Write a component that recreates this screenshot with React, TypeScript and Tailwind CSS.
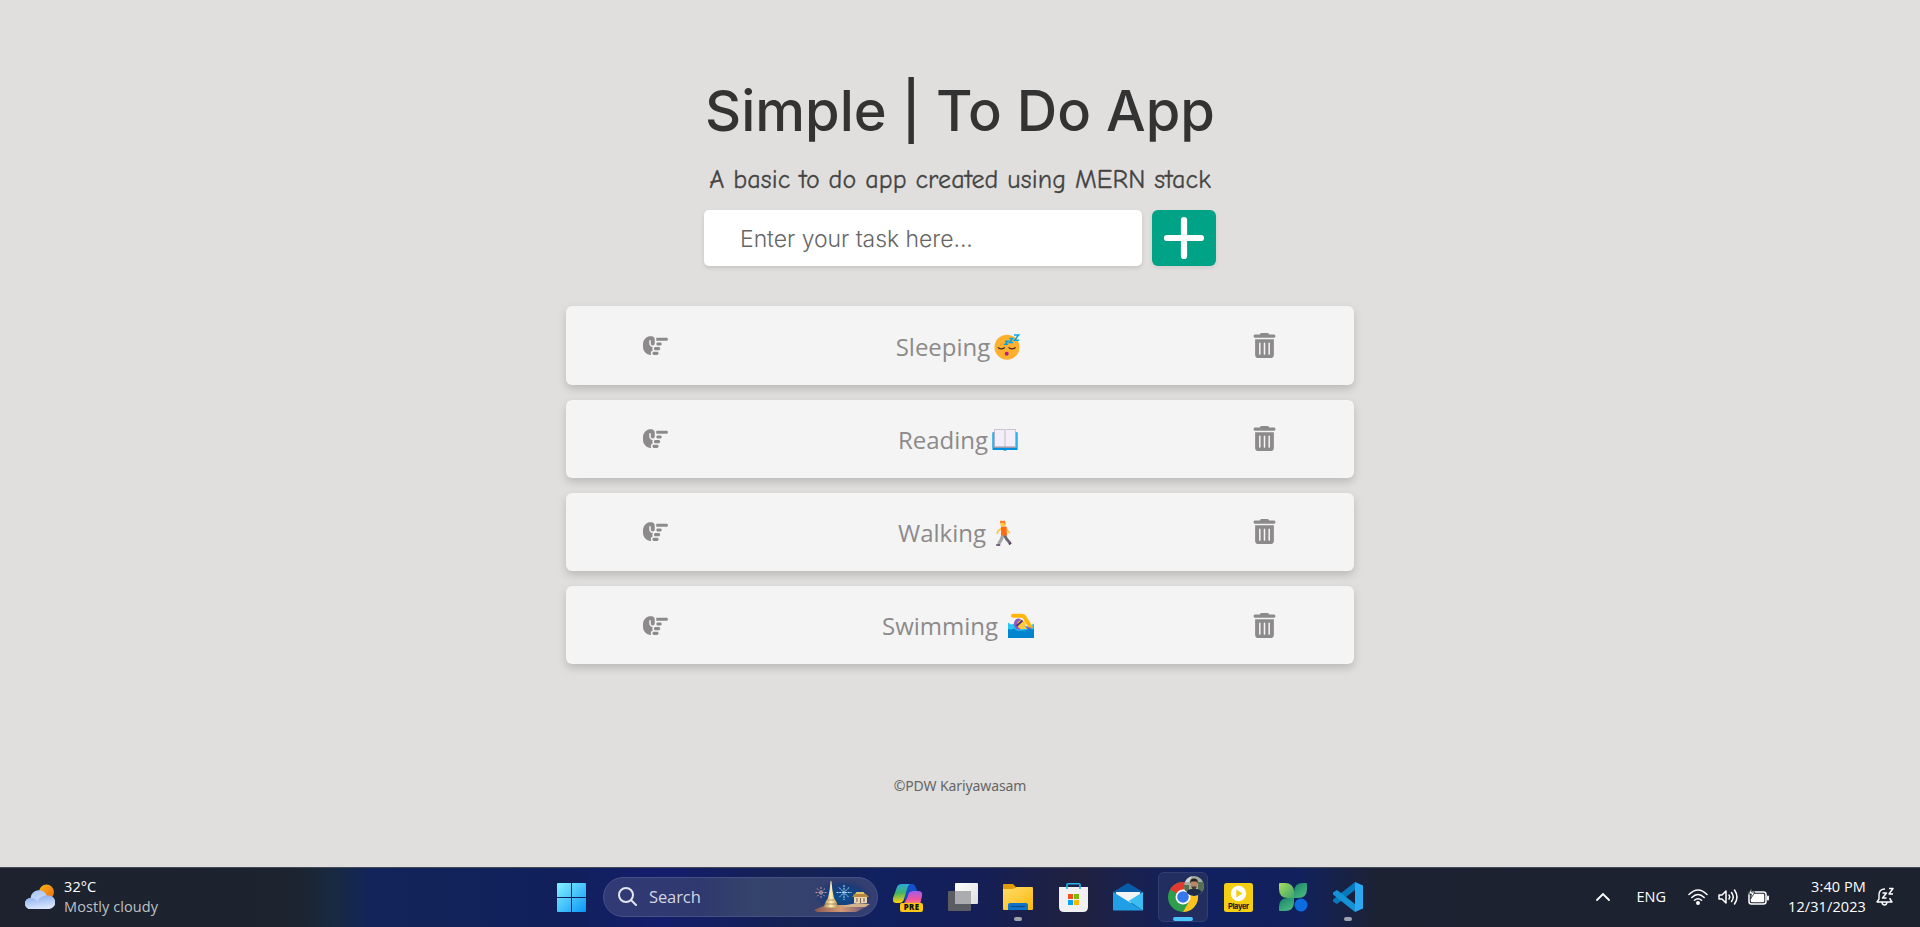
import React from "react";
import { FaHandPointRight, FaTrashCan } from "react-icons/fa6";

const Sleeping = () => (
  <svg width="26" height="26" viewBox="0 0 26 26">
    <circle cx="13" cy="13.2" r="12.5" fill="#ffb02e" />
    <path d="M4.3 13.8q3 2.2 6.2 0M15 13.8q3 2.2 6.2 0" stroke="#402a32" strokeWidth="1.3" fill="none" strokeLinecap="round" />
    <circle cx="12.7" cy="19.7" r="2" fill="#bb1d80" />
    <path d="M11 7.3h3l-3 3h3M15.3 4.5h3.4l-3.2 4h3.6M20 1h4.600l-4 5.200h4.600" stroke="#00a6ed" strokeWidth="1.5" fill="none" />
  </svg>
);

const Book = () => (
  <svg width="26" height="26" viewBox="0 0 26 26">
    <path d="M.5 6q0-.8.8-.8h23.400q.8 0 .8.8v17H15q-2 1.500-4 0H.5z" fill="#0090dd" />
    <path d="M.5 6q0-.8.8-.8H2.500V21H.5zM23.500 5.200h1.200q.8 0 .8.800v15h-2z" fill="#26b7f2" />
    <path d="M2.500 2.500h9q1.500 0 1.500 1q0-1 1.500-1h9V20.300H2.500z" fill="#f3eef8" />
    <path d="M2.500 20.300V2.500h9q1.500 0 1.500 1q0-1 1.500-1h9v17.800" fill="none" stroke="#b8aec0" strokeWidth=".7" />
    <path d="M13 3.500v17" stroke="#c4bccb" strokeWidth="1" />
    <path d="M2.500 20.200h21" stroke="#a39aac" strokeWidth="1.500" />
  </svg>
);

const Walker = () => (
  <svg width="26" height="26" viewBox="0 0 26 26">
    <path d="M11 15 9 20 6.500 24" stroke="#a6a4a8" strokeWidth="3.300" fill="none" />
    <path d="M12.500 15 14.500 19 18 23" stroke="#6b6870" strokeWidth="2.800" fill="none" />
    <path d="M4.200 25h4M17 24.500l2.200-1.800" stroke="#533566" strokeWidth="1.700" />
    <path d="M10 8 6 11 5 14M14 8l2 3.500 2 1.500" stroke="#ffc83d" strokeWidth="1.700" fill="none" />
    <path d="M9 6.500h5.500L15 15.500H9z" fill="#ff6a16" />
    <circle cx="11" cy="3.700" r="2.700" fill="#ffc83d" />
    <path d="M8 .8h5l.5 4-2-1.800H8z" fill="#ff822d" />
  </svg>
);

const Swimmer = () => (
  <svg width="26" height="26" viewBox="0 0 26 26">
    <path d="M0 9.500l3 2 4-1 4 3 5-1 5 1 5-3V25H0z" fill="#26c5f5" />
    <ellipse cx="10.500" cy="11" rx="4.600" ry="5.500" fill="#8b5bbf" />
    <circle cx="13.500" cy="11.500" r="4.200" fill="#ffc83d" />
    <path d="M12 16l4-6 3 6z" fill="#ffc83d" />
    <path d="M8.500 13 14.500 7.500" stroke="#49347c" strokeWidth="1.800" />
    <path d="M5 2.800h8.500q2.300 0 3.500 2.200l5.500 9" stroke="#ffb60a" strokeWidth="4" fill="none" strokeLinecap="round" />
    <path d="M17 13.500l7 1.500-2 3z" fill="#8b5bbf" />
    <path d="M0 16q3 1 6-.5 3 3 7 2 6 0 8-2 2 1.500 5 .5v9H0z" fill="#0084ce" />
  </svg>
);

const tasks = [
  { name: "Sleeping", gap: "gap-[4px]", Icon: Sleeping, row: "h-[79px]", label: "pt-[3px]" },
  { name: "Reading", gap: "gap-[4px]", Icon: Book, row: "h-[78px] pb-[2px]", label: "pt-[3px]" },
  { name: "Walking", gap: "gap-[6px]", Icon: Walker, row: "h-[78px] pb-[2px]", label: "pt-[3px]" },
  { name: "Swimming", gap: "gap-[10px]", Icon: Swimmer, row: "h-[78px]", label: "pt-[1px]" },
];

const Weather = () => (
  <svg width="30" height="26" viewBox="0 0 30 26">
    <defs>
      <linearGradient id="sun" x2="1" y2="1"><stop stopColor="#f9b51b" /><stop offset="1" stopColor="#ef6a10" /></linearGradient>
      <linearGradient id="cl" x2=".3" y2="1"><stop stopColor="#a3c1f5" /><stop offset="1" stopColor="#dce8fb" /></linearGradient>
      <linearGradient id="cl2" x2=".3" y2="1"><stop stopColor="#80a7ee" /><stop offset="1" stopColor="#d8e5fb" /></linearGradient>
    </defs>
    <circle cx="21.500" cy="8" r="7.500" fill="url(#sun)" />
    <path d="M5.500 25a5.500 5.500 0 0 1 0-11A8.500 8.500 0 0 1 22 12L24 25z" fill="url(#cl)" />
    <path d="M5.500 25a5.500 5.500 0 0 1 0-11q4-.5 7 3 3-5.500 10-5.500a6.800 6.800 0 0 1 2 13.500z" fill="url(#cl2)" />
  </svg>
);

const Windows = () => (
  <svg width="29" height="29" viewBox="0 0 29 29">
    <defs><linearGradient id="win" x2="1" y2="1"><stop stopColor="#86f2ff" /><stop offset="1" stopColor="#0a96f8" /></linearGradient></defs>
    <path d="M1 0h13v14H0V1q0-1 1-1zM15 0h13q1 0 1 1v13H15zM0 15h14v14H1q-1 0-1-1zM15 15h14v13q0 1-1 1H15z" fill="url(#win)" />
  </svg>
);

const SearchArt = () => (
  <svg width="58" height="34" viewBox="0 0 58 34">
    <defs>
      <radialGradient id="sky"><stop stopColor="#075091" /><stop offset=".65" stopColor="#123d7c" stopOpacity=".8" /><stop offset="1" stopColor="#26336e" stopOpacity="0" /></radialGradient>
      <linearGradient id="gold"><stop stopColor="#a57d47" /><stop offset=".5" stopColor="#fff0b8" /><stop offset="1" stopColor="#b18545" /></linearGradient>
      <linearGradient id="ground"><stop stopColor="#87544d" /><stop offset=".5" stopColor="#d59b74" /><stop offset="1" stopColor="#655076" /></linearGradient>
    </defs>
    <ellipse cx="30" cy="16" rx="29" ry="17" fill="url(#sky)" />
    <path d="M1 30 13 25h20l22 1-12 6H4z" fill="url(#ground)" />
    <path d="M28 26l16-3 13 1-5 3H32z" fill="#d3b28d" />
    <path d="M17.600 1h.8l1 9 1.600 8 2.500 4 1 3 1 2.500H10.500l1-2.500 1-3 2.500-4 1.600-8z" fill="url(#gold)" />
    <path d="M14.500 20h7M12.500 24h11" stroke="#87602f" strokeWidth=".6" />
    <path d="M31 5v15M23.500 12.500h15M26 7.500l10 10M36 7.500l-10 10" stroke="#b8d9ff" strokeWidth="1" strokeDasharray="2 .8" />
    <path d="M8 7v11M2.500 12.500h11M4 8.500l8 8M12 8.500l-8 8" stroke="#c99a9e" strokeWidth="1" strokeDasharray="2 1" />
    <path d="M39 17l2-3h12l3 3z" fill="#b8863c" /><path d="M42 14l1.500-2h7l1.500 2z" fill="#e8c36d" />
    <path d="M41 17h13v6H41z" fill="#e9d6b4" /><path d="M44 18v4M47.500 18v5M51 18v4" stroke="#795d4d" strokeWidth="1" />
  </svg>
);

const Copilot = () => (
  <svg width="30" height="29" viewBox="0 0 30 29">
    <defs>
      <linearGradient id="co1" y2="1" x2=".1"><stop stopColor="#2aa5ee" /><stop offset=".5" stopColor="#3fb568" /><stop offset="1" stopColor="#ffcf0d" /></linearGradient>
      <linearGradient id="co2" y2="1" x2="0"><stop stopColor="#a45aed" /><stop offset=".6" stopColor="#f0569c" /><stop offset="1" stopColor="#ff9461" /></linearGradient>
    </defs>
    <path d="M9 1h10q3 0 4 4l1 3h-5q-2 0-3 3l-4 8z" fill="#1450ca" />
    <path d="M9 1h8q-2 1-3 5l-3 10q-1 4-5 4H3q-4 0-3-5L4 4q1-3 5-3z" fill="url(#co1)" />
    <path d="M20 8h5q5 0 4 5l-2 9H7q5-1 7-7l2-5q1-2 4-2z" fill="url(#co2)" />
    <rect x="7" y="20" width="23" height="9" rx="2" fill="#fcc614" />
    <text x="18.500" y="27.200" textAnchor="middle" fontSize="7.800" fontWeight="800" letterSpacing=".4" fontFamily="Open Sans, sans-serif" fill="#111">PRE</text>
  </svg>
);

const TaskView = () => (
  <svg width="30" height="29" viewBox="0 0 30 29">
    <defs><linearGradient id="tv" x2="1" y2="1"><stop stopColor="#fff" /><stop offset="1" stopColor="#dedede" /></linearGradient></defs>
    <rect y="8" width="23" height="20" rx="1" fill="#5b5d62" />
    <rect x="7" width="23" height="21" rx="1" fill="url(#tv)" />
    <path d="M7 8h16v13H7z" fill="#aaacb0" />
  </svg>
);

const Explorer = () => (
  <svg width="30" height="28" viewBox="0 0 30 28">
    <defs><linearGradient id="fo" x2="1" y2="1"><stop stopColor="#ffdc6b" /><stop offset="1" stopColor="#fbb90c" /></linearGradient></defs>
    <path d="M0 2q0-1 1-1h9l3 3h-1v4H0z" fill="#e09c08" />
    <path d="M0 6h10l3-2h16q1 0 1 1v21q0 1-1 1H1q-1 0-1-1z" fill="url(#fo)" />
    <path d="M5 27v-5q0-2 2-2h16q2 0 2 2v5z" fill="#0d74ca" /><path d="M8 23.500h14" stroke="#084b86" strokeWidth="1.200" />
  </svg>
);

const Store = () => (
  <svg width="29" height="29" viewBox="0 0 29 29">
    <path d="M0 4h29v20q0 5-5 5H5q-5 0-5-5z" fill="#f1f1f3" />
    <path d="M8 6V1.500Q8 .8 9 .8h11q1 0 1 .7V6" fill="none" stroke="#25b5ea" strokeWidth="1.600" />
    <path d="M9 11h5v5H9z" fill="#f25022" /><path d="M15 11h5v5h-5z" fill="#7fba00" /><path d="M9 17h5v5H9z" fill="#00a4ef" /><path d="M15 17h5v5h-5z" fill="#ffb900" />
  </svg>
);

const Mail = () => (
  <svg width="30" height="28" viewBox="0 0 30 28">
    <path d="M0 9 15 0l15 9v5H0z" fill="#075ca9" /><path d="M3 9h24v7l-12 6L3 16z" fill="#f1f2f3" />
    <path d="M0 9l30 18.500H1q-1 0-1-1z" fill="#219fe6" /><path d="M30 9v18.500L15.500 18z" fill="#39bdf3" />
  </svg>
);

const Chrome = () => (
  <svg width="30" height="30" viewBox="0 0 30 30" className="overflow-visible">
    <circle cx="15" cy="15" r="15" fill="#2f9e4a" />
    <path d="M15 15 2 7.500A15 15 0 0 1 28 7.500H15z" fill="#e23a2e" />
    <path d="M15 7.500h13A15 15 0 0 1 15 30l6.500-11.300z" fill="#fcc31e" />
    <circle cx="15" cy="15" r="7.500" fill="#fff" /><circle cx="15" cy="15" r="5.800" fill="#3478ec" />
    <defs><clipPath id="av"><circle cx="26" cy="4" r="10" /></clipPath></defs>
    <g clipPath="url(#av)">
      <path d="M16-6h20v21H16z" fill="#a3aea0" /><path d="M16 3h5v6h-5zM30 0h6v11h-6z" fill="#587052" /><path d="M16-6h8l-3 6h-5z" fill="#d3dad4" />
      <path d="M18 15q-1-7 5-8h6q6 1 6 8z" fill="#1c2b49" /><ellipse cx="26" cy="2.500" rx="3.400" ry="4.400" fill="#b5876d" />
      <path d="M22.300 1.500q-.8-5 3.700-5t3.700 5l-1.200-2h-5z" fill="#28221f" /><path d="M23.300 4.500h5.400q-.7 3-2.700 3t-2.700-3z" fill="#4b3831" />
    </g>
  </svg>
);

const Player = () => (
  <svg width="29" height="29" viewBox="0 0 29 29">
    <rect width="29" height="29" rx="2.500" fill="#f4ce12" /><circle cx="14.500" cy="10.500" r="7.700" fill="#fff" />
    <path d="M12.300 6.500v8l6.200-4z" fill="#f4ce12" />
    <text x="14.500" y="25.500" textAnchor="middle" fontSize="7.500" fontWeight="700" fontFamily="Inter, sans-serif" fill="#171717" textLength="21">Player</text>
  </svg>
);

const Leaves = () => (
  <svg width="29" height="29" viewBox="0 0 29 29">
    <defs>
      <linearGradient id="lf" x2="1" y2="1"><stop stopColor="#a8e05c" /><stop offset="1" stopColor="#3fa56d" /></linearGradient>
      <linearGradient id="lf2" x2=".7" y2="1"><stop stopColor="#178568" /><stop offset="1" stopColor="#4bb880" /></linearGradient>
    </defs>
    <path d="M1 0h5q8 0 9 8v7H9Q0 15 0 6V1q0-1 1-1z" fill="url(#lf)" />
    <path d="M27 0q1 0 1 1v5q0 9-9 9h-4V9q0-9 9-9z" fill="url(#lf2)" /><path d="M15 15v4q0 9-9 9H1q-1 0-1-1v-3q0-9 9-9z" fill="url(#lf2)" />
    <circle cx="22" cy="22" r="6.500" fill="#0c6de0" />
  </svg>
);

const VSCode = () => (
  <svg width="30" height="30" viewBox="0 0 30 30">
    <path d="M22 0 30 3.500v23L22 30z" fill="#2aa9f2" />
    <path d="M22 0v8L4 22 0 19.500v-2z" fill="#0679bd" /><path d="M22 30v-8L4 8 0 10.500v2z" fill="#1592d6" />
  </svg>
);

const TrayIcons = () => (
  <svg width="82" height="20" viewBox="0 0 82 20" fill="none" stroke="#fff" strokeWidth="1.500" strokeLinecap="round">
    <path d="M1 7.500q9-9 18 0M3.800 10.500q6.200-6 12.400 0M6.500 13.300q3.500-3 7 0" />
    <circle cx="10" cy="16" r="1.200" fill="#fff" />
    <path d="M31 8h3l4-4v12l-4-4h-3zM41 8q1.500 2 0 4M43.500 5.500q3.500 4.500 0 9M46.500 3q5 7 0 14" strokeLinejoin="round" />
    <rect x="61" y="5" width="17" height="12" rx="2.500" /><rect x="63.500" y="7.500" width="12" height="7" rx=".5" fill="#fff" />
    <path d="M80 9.500v3" strokeWidth="2" /><path d="M63.500 1 60.500 7h3l-1 5 4.500-7h-3z" fill="#fff" stroke="#1d222d" strokeWidth=".8" />
  </svg>
);

const Slot = ({ children, dot, active }: { children: React.ReactNode; dot?: boolean; active?: boolean }) => (
  <div className={`relative flex h-[50px] w-[50px] items-center justify-center rounded-md border ${active ? "border-[#333e70] bg-[#222d60]" : "border-transparent"}`}>
    {children}
    {dot && <span className="absolute bottom-0 h-1 w-2 rounded-full bg-[#a0a1ae]" />}
    {active && <span className="absolute bottom-0 h-1 w-5 rounded-full bg-[#4cc2ff]" />}
  </div>
);

export default function App() {
  return (
    <div className="flex h-[927px] w-[1920px] flex-col overflow-hidden bg-[#e0dfdd] font-['Inter',sans-serif]">
      <main className="flex flex-1 flex-col items-center pt-[76px]">
        <h1 className="h-[70px] text-center text-[56px] leading-[70px] font-medium whitespace-nowrap text-[#333]">Simple | To Do App</h1>
        <p className="mt-[16px] h-[34px] text-center font-['Comic_Sans_MS','Comic_Neue','Open_Sans',cursive] text-[26px] leading-[36px] font-normal tracking-[0.12px] whitespace-nowrap text-[#444] [-webkit-text-stroke:0.3px_#444]">A basic to do app created using MERN stack</p>
        <form className="mt-[14px] flex gap-[10px]">
          <input placeholder="Enter your task here..." className="h-[56px] w-[438px] rounded-[5px] bg-white px-[36px] pt-[2px] text-[23px] font-light tracking-[-0.05px] text-[#666] shadow-[0_2px_4px_rgba(0,0,0,0.12)] outline-none placeholder:text-[#666] placeholder:opacity-100" />
          <button type="button" className="flex h-[56px] w-[64px] items-center justify-center rounded-[6px] bg-[#00a385] text-white shadow-[0_2px_4px_rgba(0,0,0,0.08)]">
            <svg width="42" height="44" viewBox="0 0 42 44" stroke="#fff" strokeWidth="6.200" strokeLinecap="round"><path d="M21 4v36M4 22h34" /></svg>
          </button>
        </form>
        <ul className="mt-[40px] flex w-[788px] flex-col gap-[15px]">
          {tasks.map(({ name, gap, Icon, row, label }) => (
            <li key={name} className={`${row} grid grid-cols-[180px_1fr_180px] items-center rounded-[6px] bg-[#f4f4f4] text-[#8c8a8a] shadow-[0_4px_8px_rgba(0,0,0,0.17)]`}>
              <FaHandPointRight size={25} className="ml-[77px]" />
              <div className={`flex items-center justify-center pr-[4px] ${label} ${gap}`}>
                <span className="font-['Open_Sans',sans-serif] text-[24px] leading-[32px]">{name}</span>
                <Icon />
              </div>
              <FaTrashCan size={25} className="ml-[78px]" />
            </li>
          ))}
        </ul>
        <footer className="mt-[110px] font-['Noto_Sans',sans-serif] text-[14px] leading-[24px] tracking-[-0.1px] text-[#666]">©PDW Kariyawasam</footer>
      </main>
      <nav className="grid h-[60px] grid-cols-[546px_1fr_546px] border-t border-[#454958] bg-[linear-gradient(90deg,#1d222e_0px,#1c2430_300px,#182a42_335px,#122459_370px,#11205b_560px,#141d6b_660px,#142253_790px,#11205f_880px,#141f58_970px,#20213f_1080px,#11205f_1190px,#12215d_1300px,#1d2232_1380px,#1c222e_1920px)] pb-[1px] font-['Open_Sans',sans-serif] text-white">
        <div className="flex items-center gap-[9px] pl-[25px]">
          <Weather />
          <div className="text-[14.5px] leading-[20px] tracking-[0.1px]"><div>32°C</div><div className="text-[#bfc1c6]">Mostly cloudy</div></div>
        </div>
        <div className="flex items-center">
          <Slot><Windows /></Slot>
          <div className="mr-[5px] ml-[7px] flex h-[40px] w-[275px] shrink-0 items-center rounded-full border border-[#465085] bg-[linear-gradient(90deg,#313a75,#30396f_35%,#34446b_55%,#343e72)] pr-[6px] pl-[14px]">
            <svg width="19" height="20" viewBox="0 0 19 20" fill="none" stroke="#e4e6ee" strokeWidth="2" strokeLinecap="round"><circle cx="8" cy="8" r="7" /><path d="m13 13 5 5" /></svg>
            <span className="ml-[12px] flex-1 text-[16.5px] tracking-[-0.1px] text-[#d3d6e2]">Search</span>
            <SearchArt />
          </div>
          <div className="flex shrink-0 gap-[5px]">
            <Slot><Copilot /></Slot><Slot><TaskView /></Slot><Slot dot><Explorer /></Slot><Slot><Store /></Slot><Slot><Mail /></Slot>
            <Slot active><Chrome /></Slot><Slot><Player /></Slot><Slot><Leaves /></Slot><Slot dot><VSCode /></Slot>
          </div>
        </div>
        <div className="flex items-center justify-end pr-[25px]">
          <svg width="14" height="8" viewBox="0 0 14 8" fill="none" stroke="#fff" strokeWidth="1.800" strokeLinecap="round"><path d="m1 7 6-6 6 6" /></svg>
          <span className="ml-[26px] text-[14.5px]">ENG</span>
          <span className="ml-[22px]"><TrayIcons /></span>
          <div className="ml-[16px] w-[80px] text-right text-[14.5px] leading-[20px] tracking-[0.1px] whitespace-nowrap"><div>3:40 PM</div><div>12/31/2023</div></div>
          <svg className="ml-[10px]" width="19" height="20" viewBox="0 0 19 20" fill="none" stroke="#fff" strokeWidth="1.400" strokeLinejoin="round"><path d="M9 2Q3 2 3 8v4l-2 3h15l-2-3v-1M6 15.500q.5 2.500 2.500 2.500t2.500-2.500M6.500 6h4l-4 5h4M13 1.500h4L13 7h4" /></svg>
        </div>
      </nav>
    </div>
  );
}
